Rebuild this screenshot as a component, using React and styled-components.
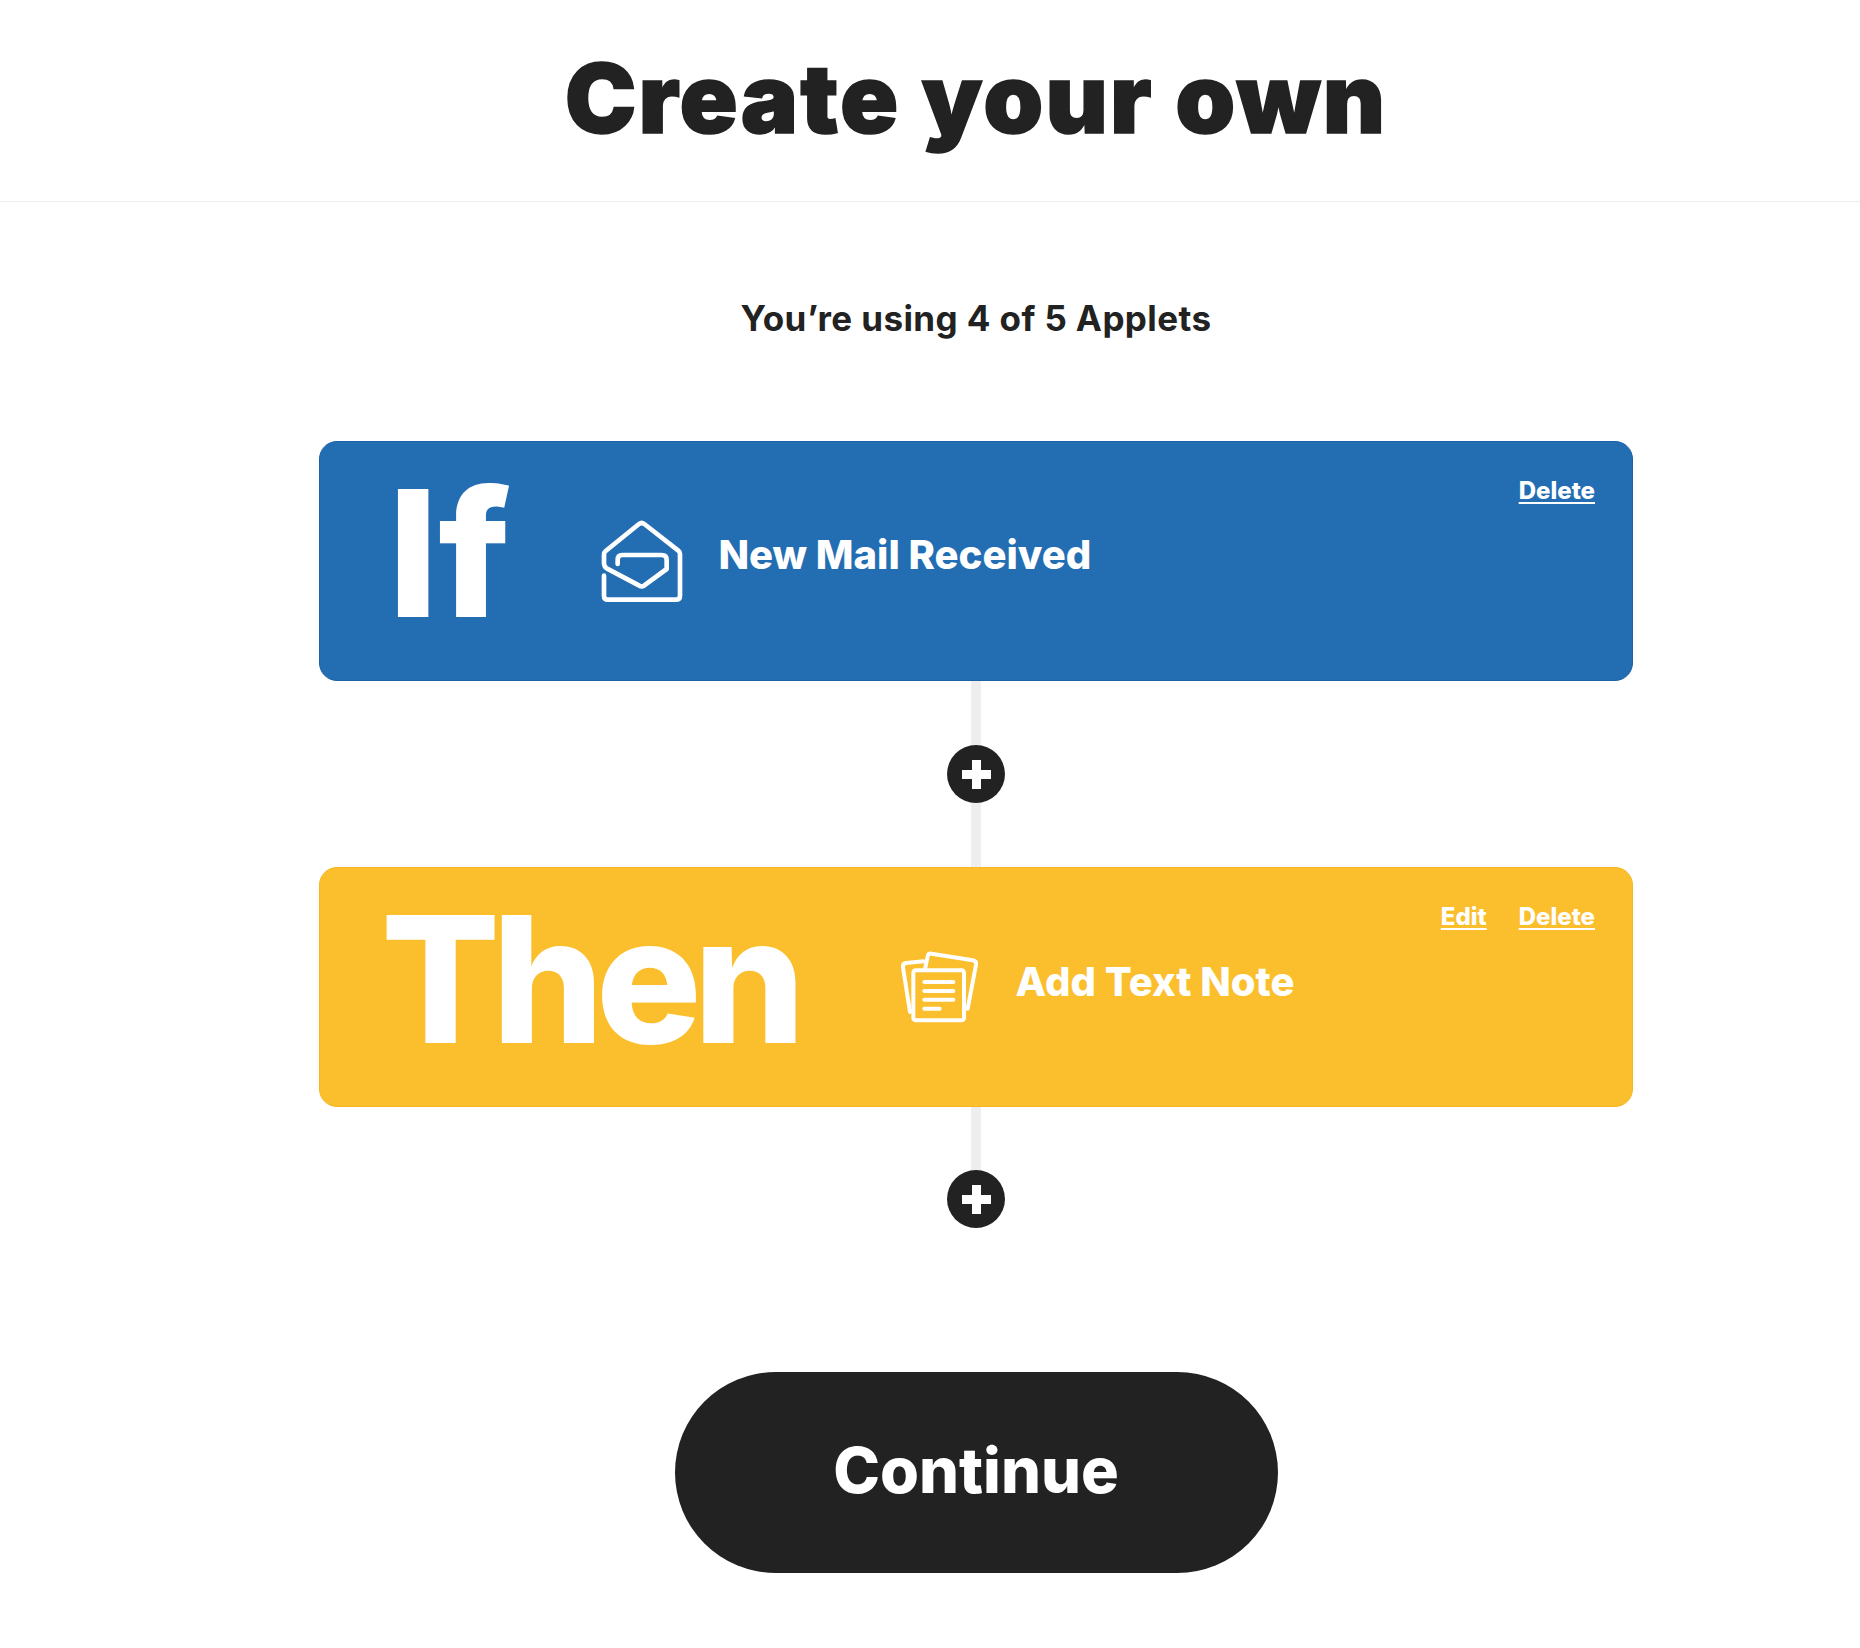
import React from "react";
import styled, { createGlobalStyle } from "styled-components";

const GlobalStyle = createGlobalStyle`
  body {
    margin: 0;
    background: #fff;
    color: #222;
    font-family: "Inter", "Liberation Sans", sans-serif;
  }
`;

const Header = styled.header`
  height: 201px;
  padding-left: 92px;
  display: flex;
  align-items: center;
  justify-content: center;
  border-bottom: 1px solid #eee;
`;

const Title = styled.h1`
  margin: 0 0 5px;
  font-size: 96px;
  line-height: 1;
  font-weight: 900;
  letter-spacing: 2.2px;
  -webkit-text-stroke: 1.5px #222;
`;

const Main = styled.main`
  padding-left: 92px;
  display: flex;
  flex-direction: column;
  align-items: center;
`;

const Usage = styled.p`
  margin: 93px 0 100px;
  height: 46px;
  line-height: 46px;
  font-size: 35px;
  font-weight: 700;
  letter-spacing: 0.4px;
`;

const Card = styled.section`
  box-sizing: border-box;
  width: 1314px;
  height: 240px;
  padding: 0 37px 0 66px;
  display: flex;
  align-items: flex-start;
  border-radius: 18px;
  border: 1px solid ${(p) => p.$edge};
  background: ${(p) => p.$color};
  color: #fff;
`;

const Word = styled.span`
  height: 200px;
  line-height: 200px;
  margin-top: 11px;
  margin-left: ${(p) => p.$inset}px;
  font-size: 176px;
  font-weight: 800;
  letter-spacing: ${(p) => p.$spacing}px;
`;

const Service = styled.div`
  margin-left: ${(p) => p.$offset}px;
  margin-top: ${(p) => p.$top}px;
  display: flex;
  align-items: center;
  gap: ${(p) => p.$gap}px;
`;

const ServiceName = styled.span`
  margin-bottom: 13px;
  font-size: 40px;
  font-weight: 800;
`;

const Actions = styled.div`
  margin-left: auto;
  margin-top: 33px;
  display: flex;
  gap: 32px;
`;

const Action = styled.a`
  font-size: 24px;
  line-height: 32px;
  font-weight: 800;
  color: #fff;
  text-decoration: underline;
  text-underline-offset: 3px;
`;

const Connector = styled.div`
  height: ${(p) => p.$height}px;
  display: flex;
  flex-direction: column;
  align-items: center;
`;

const Line = styled.div`
  width: 10px;
  flex: 1;
  background: #eee;
`;

const AddButton = styled.button`
  flex: none;
  width: 58px;
  height: 58px;
  padding: 0;
  border: 0;
  border-radius: 50%;
  background: #222;
  display: flex;
  align-items: center;
  justify-content: center;
`;

const ContinueButton = styled.button`
  width: 603px;
  height: 201px;
  margin-top: 144px;
  padding: 0 0 6px;
  border: 0;
  border-radius: 101px;
  background: #222;
  color: #fff;
  font-family: inherit;
  font-size: 63px;
  font-weight: 800;
`;

const MailIcon = () => (
  <svg width="84" height="84" viewBox="60 55 252 252" fill="none">
    <path
      d="M113 190V177Q113 163 127 163H245Q260 163 260 178V205L192 255Q185 259 178 255L80 203Q72 198 72 188V162Q72 155 77 151L177 70Q185 64 193 70L295 150Q300 154 300 160V285Q300 297 288 297H84Q72 297 72 285V225"
      stroke="#fff"
      strokeWidth="14"
      strokeLinecap="round"
      strokeLinejoin="round"
    />
  </svg>
);

const NotesIcon = () => (
  <svg width="80" height="74" viewBox="62 62 240 222" fill="none" stroke="#fff" strokeWidth="12" strokeLinecap="round" strokeLinejoin="round">
    <path d="M92 245L71 112Q69 100 80 98L133 93" />
    <path d="M138 112L145 78Q147 68 157 70L280 90Q292 92 290 104L265 235" />
    <rect x="102" y="120" width="152" height="150" rx="7" />
    <path d="M135 155H222M135 182H222M135 208H222M135 235H181" />
  </svg>
);

const PlusIcon = () => (
  <svg width="29" height="29" viewBox="0 0 29 29">
    <path d="M10 0H19V10H29V19H19V29H10V19H0V10H10Z" fill="#fff" />
  </svg>
);

const App = () => {
  return (
    <>
      <GlobalStyle />
      <Header>
        <Title>Create your own</Title>
      </Header>
      <Main>
        <Usage>You’re using 4 of 5 Applets</Usage>
        <Card $color="#236db3" $edge="#1a62a9">
          <Word $inset={2} $spacing={0}>If</Word>
          <Service $offset={90} $top={77} $gap={34}>
            <MailIcon />
            <ServiceName>New Mail Received</ServiceName>
          </Service>
          <Actions>
            <Action>Delete</Action>
          </Actions>
        </Card>
        <Connector $height={186}>
          <Line />
          <AddButton>
            <PlusIcon />
          </AddButton>
          <Line />
        </Connector>
        <Card $color="#fbbe2c" $edge="#f6b521">
          <Word $inset={-5} $spacing={-8}>Then</Word>
          <Service $offset={103} $top={83} $gap={35}>
            <NotesIcon />
            <ServiceName>Add Text Note</ServiceName>
          </Service>
          <Actions>
            <Action>Edit</Action>
            <Action>Delete</Action>
          </Actions>
        </Card>
        <Connector $height={121}>
          <Line />
          <AddButton>
            <PlusIcon />
          </AddButton>
        </Connector>
        <ContinueButton>Continue</ContinueButton>
      </Main>
    </>
  );
};

export default App;
